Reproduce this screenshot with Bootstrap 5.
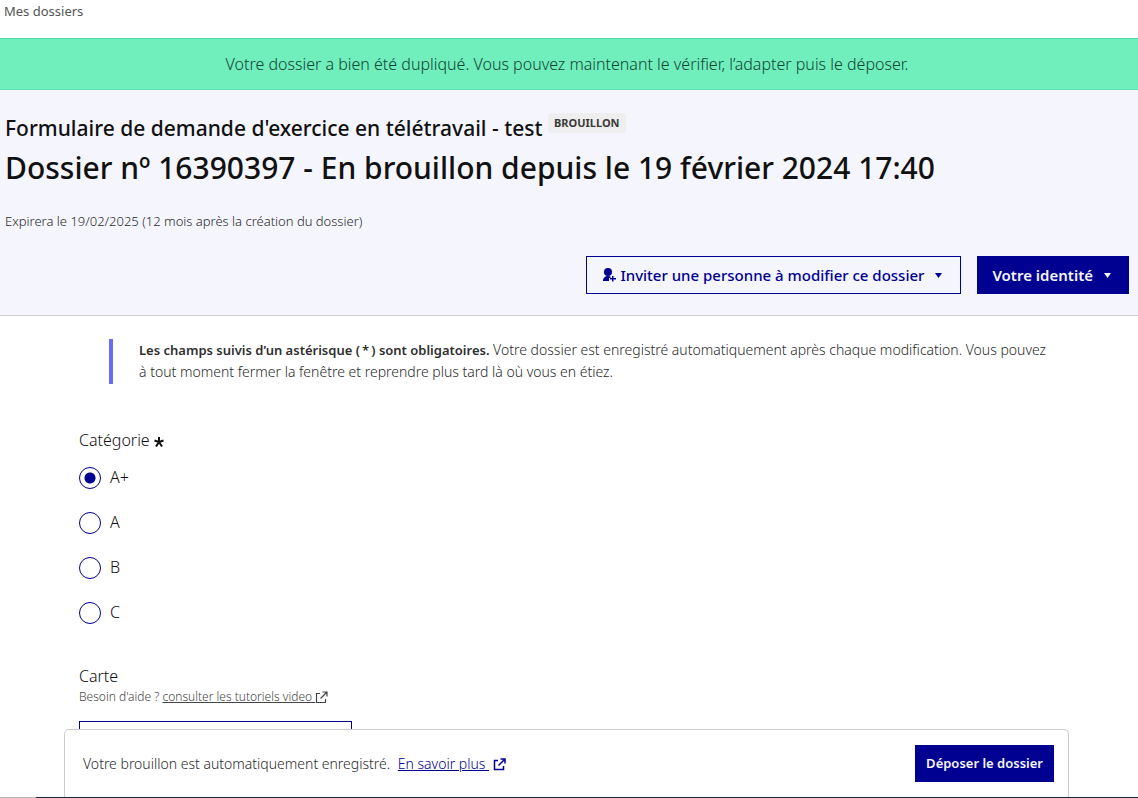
<!DOCTYPE html>
<html lang="fr">
<head>
<meta charset="utf-8">
<meta name="viewport" content="width=device-width, initial-scale=1">
<title>Dossier nº 16390397</title>
<link href="https://cdn.jsdelivr.net/npm/bootstrap@5.3.0/dist/css/bootstrap.min.css" rel="stylesheet">
<style>
  :root { --blue: #000091; --grey: #2a2a2a; --title: #111; --line: #ccc; }
  body { font-family: "Noto Sans", "Open Sans", sans-serif; font-size: 16px; font-weight: 300; line-height: 24px; color: var(--grey); }
  .crumb { display: block; font-size: 13px; font-weight: 400; line-height: 22px; color: #555; text-decoration: none; }
  .crumb-bar { height: 38px; }
  .flash { background: #70eebc; border-top: 1px solid #53dba5; border-bottom: 1px solid #5ce5b0; color: #0f4634; padding: 13px 4px 13px 0; }
  .file-header { background: #f5f5fe; border-bottom: 1px solid var(--line); padding: 20px 9px 21px 5px; }
  .file-header h1 { margin: 0; color: var(--title); font-weight: 550; font-size: 21px; line-height: 36px; }
  .file-header h1 .number { display: block; font-size: 30px; line-height: 44px; }
  .state { display: inline-block; vertical-align: top; margin: 3px 0 0; padding: 0 6px; border-radius: 4px; background: #eee; color: #3a3a3a; font-size: 11px; line-height: 20px; font-weight: 700; }
  .txt-s { font-size: 13px; line-height: 22px; }
  .txt-m { font-size: 14px; line-height: 22px; }
  .btn { --bs-btn-border-radius: 0; --bs-btn-padding-x: 15px; --bs-btn-padding-y: 6px; --bs-btn-font-size: 15px; --bs-btn-font-weight: 500; line-height: 24px; }
  .btn-line { --bs-btn-color: var(--blue); --bs-btn-border-color: var(--blue); --bs-btn-hover-color: var(--blue); --bs-btn-hover-border-color: var(--blue); }
  .btn-full { --bs-btn-color: #f5f5fe; --bs-btn-bg: var(--blue); --bs-btn-border-color: var(--blue); --bs-btn-hover-color: #fff; --bs-btn-hover-bg: #1212ff; --bs-btn-font-weight: 600; --bs-btn-padding-x: 14px; }
  .btn-small { --bs-btn-font-size: 13px; --bs-btn-padding-x: 10px; line-height: 23px; }
  .arrow { width: 7px; height: 5px; margin: 1px 3px 0 11px; }
  .notice { border-left: 4px solid #6a6af4; margin: 23px 88px 0 109px; padding: 0 0 1px 26px; }
  .notice strong { font-size: 13px; font-weight: 600; color: #2f2f2f; }
  .form-zone { padding: 44px 80px 0 79px; color: var(--title); }
  legend { font-size: 16px; line-height: 24px; margin: 0 0 14px; }
  .choice { display: flex; align-items: center; gap: 9px; margin-bottom: 21px; line-height: 22px; }
  .choice label { padding-bottom: 2px; }
  .choice input { appearance: none; width: 22px; height: 22px; margin: 0; border: 1px solid var(--blue); border-radius: 50%; background: #fff; }
  .choice input:checked { background: radial-gradient(circle, var(--blue) 5px, #fff 6px); }
  .map-label { margin-top: 18px; }
  .help { font-size: 12px; line-height: 18px; color: #444; }
  .help a { color: #444; }
  .map-input { width: 273px; height: 36px; border: 1px solid var(--blue); border-radius: 0; margin-top: 15px; }
  .save-bar { margin: 0 69px 0 64px; height: 68px; padding: 0 14px 0 18px; background: #fff; border: 1px solid var(--line); border-bottom: 0; border-radius: 5px 5px 0 0; }
  .save-bar a { color: var(--blue); }
  .edge { border-bottom: 1px solid; border-image: linear-gradient(to right, #bbb 37px, #1b2440 37px) 1; }
</style>
</head>
<body>
<nav class="crumb-bar px-1" aria-label="Fil d’Ariane"><a class="crumb" href="#">Mes dossiers</a></nav>
<div class="flash text-center" role="status">Votre dossier a bien été dupliqué. Vous pouvez maintenant le vérifier, l’adapter puis le déposer.</div>
<header class="file-header">
  <h1>Formulaire de demande d'exercice en télétravail - test <span class="state">BROUILLON</span><span class="number">Dossier nº 16390397 - En brouillon depuis le 19 février 2024 17:40</span></h1>
  <p class="txt-s mt-3 pt-1 mb-4">Expirera le 19/02/2025 (12 mois après la création du dossier)</p>
  <div class="d-flex justify-content-end gap-3">
    <button type="button" class="btn btn-line d-flex align-items-center"><svg class="me-1" width="14" height="14" viewBox="0 0 14 14" fill="currentColor" aria-hidden="true"><circle cx="6" cy="4" r="4"/><path d="M1 13c0-3 2-5 5-5 1 0 2 .2 2.500.500V10H7v3zM10 8h1.500v2H14v1.500h-2.500v2H10v-2H8V10h2z"/></svg>Inviter une personne à modifier ce dossier<svg class="arrow" viewBox="0 0 7 5" fill="currentColor" aria-hidden="true"><path d="M0 0h7L3.500 5z"/></svg></button>
    <button type="button" class="btn btn-full d-flex align-items-center">Votre identité<svg class="arrow" viewBox="0 0 7 5" fill="currentColor" aria-hidden="true"><path d="M0 0h7L3.500 5z"/></svg></button>
  </div>
</header>
<main>
  <p class="notice txt-m"><strong>Les champs suivis d’un astérisque (&#8239;*&#8239;) sont obligatoires.</strong> Votre dossier est enregistré automatiquement après chaque modification. Vous pouvez à tout moment fermer la fenêtre et reprendre plus tard là où vous en étiez.</p>
  <form class="form-zone">
    <fieldset>
      <legend>Catégorie <svg width="10" height="10" viewBox="0 0 10 10" stroke="currentColor" stroke-width="2" role="img" aria-label="obligatoire"><path d="M5 5V0M5 5L.5 3.500M5 5l4.500-1.500M5 5L2 9.500M5 5l3 4.500"/></svg></legend>
      <div class="choice"><input type="radio" name="cat" id="c1" checked><label for="c1">A+</label></div>
      <div class="choice"><input type="radio" name="cat" id="c2"><label for="c2">A</label></div>
      <div class="choice"><input type="radio" name="cat" id="c3"><label for="c3">B</label></div>
      <div class="choice"><input type="radio" name="cat" id="c4"><label for="c4">C</label></div>
    </fieldset>
    <label class="map-label d-block" for="map">Carte</label>
    <div class="help">Besoin d'aide ? <a href="#">consulter les tutoriels video <svg width="13" height="13" viewBox="0 0 13 13" fill="none" stroke="currentColor" stroke-width="1.200" aria-hidden="true"><path d="M5 2.500H1.500v9h9V8M7.500 1H12v4.500M12 1L5.500 7.500"/></svg></a></div>
    <input class="map-input" id="map" type="text">
  </form>
</main>
<div class="fixed-bottom edge">
  <div class="save-bar txt-m d-flex align-items-center justify-content-between">
    <div>Votre brouillon est automatiquement enregistré. <a class="ms-1" href="#">En savoir plus <svg class="ms-1" width="13" height="13" viewBox="0 0 13 13" fill="none" stroke="currentColor" stroke-width="1.500" aria-hidden="true"><path d="M5 2.500H1.500v9h9V8M7.500 1H12v4.500M12 1L5.500 7.500"/></svg></a></div>
    <button type="button" class="btn btn-full btn-small">Déposer le dossier</button>
  </div>
</div>
<script src="https://cdn.jsdelivr.net/npm/bootstrap@5.3.0/dist/js/bootstrap.bundle.min.js"></script>
</body>
</html>
